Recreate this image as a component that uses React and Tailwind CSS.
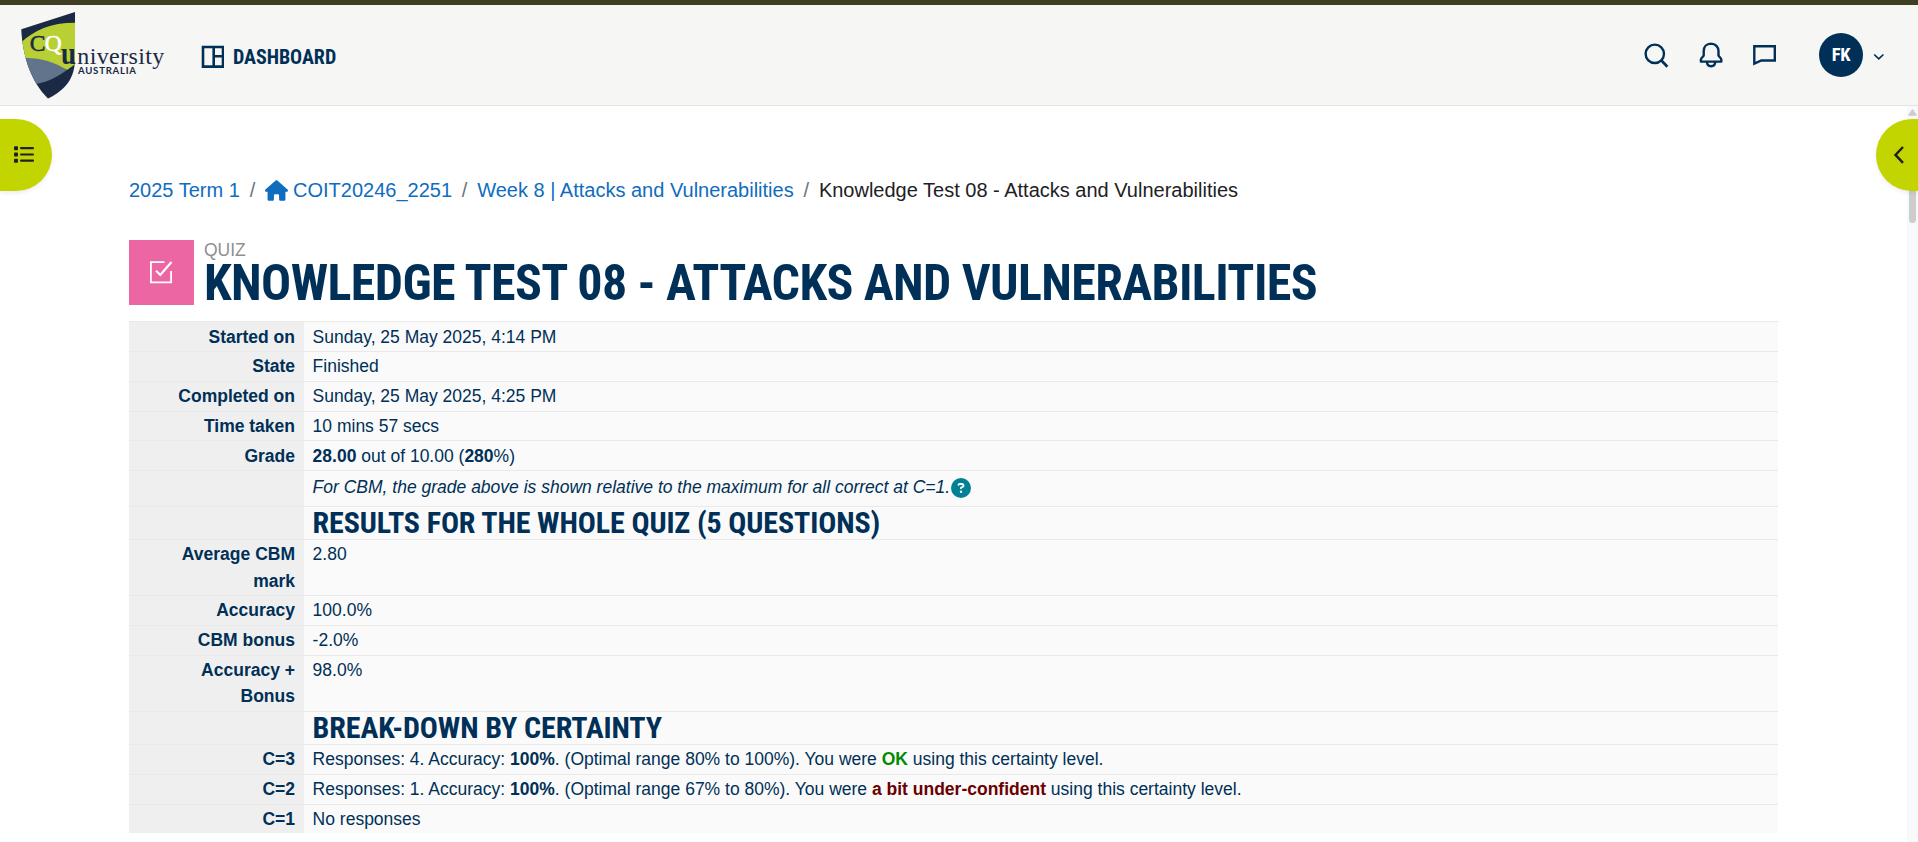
import { FaHouse, FaCircleQuestion } from "react-icons/fa6";

function Logo() {
  return (
    <svg width="150" height="92" viewBox="18 9 150 92" className="block">
      <clipPath id="shield">
        <path d="M21.3 29.3 L75 12 V58 C75 79 65 90 48 98.6 C31 82 22.500 56 21.300 29.300Z" />
      </clipPath>
      <g clipPath="url(#shield)">
        <rect x="18" y="9" width="60" height="92" fill="#1a2a45" />
        <path d="M18 46 C31 31 51 22 78 22.800 V62 L67 70 L27 58 L18 60Z" fill="#b9d035" />
        <path d="M18 58.200 C38 56.600 52 61 67.200 69.700 C58 76.500 49 81.500 36 84 L18 84Z" fill="#61748b" />
      </g>
      <g fontFamily="'Liberation Serif', serif">
        <text x="29.800" y="51" fontSize="23.500" fill="#1a2a45" stroke="#1a2a45" strokeWidth="0.500">C</text>
        <text x="44.800" y="51" fontSize="23.500" fill="#fff" stroke="#fff" strokeWidth="0.500">Q</text>
        <text x="61" y="63.500" fontSize="31" fontWeight="700" fill="#1a2a45" textLength="15" lengthAdjust="spacingAndGlyphs">u</text>
        <text x="77.300" y="63.500" fontSize="24" fill="#1a2a45" textLength="87" lengthAdjust="spacing">niversity</text>
      </g>
      <text x="78" y="73.800" fontSize="9.600" fontFamily="Lato, sans-serif" fontWeight="700" fill="#1a2a45" textLength="58" lengthAdjust="spacing">AUSTRALIA</text>
    </svg>
  );
}

function Header() {
  return (
    <header className="flex h-[106px] items-start border-t-[5px] border-b border-t-[#3e3f22] border-b-[#e4e4e2] bg-[#f6f6f4] text-[#003057]">
      <div className="ml-[18px] mt-1">
        <Logo />
      </div>
      <a className="ml-8 mt-[39px] flex items-start">
        <svg width="24" height="24" viewBox="0 0 24 24" fill="none" stroke="currentColor" strokeWidth="2.600">
          <path d="M3 3h20v19.600h-20zM13.700 3v19.600M13.700 12.200h9.300" />
        </svg>
        <span className="mt-px ml-[9px] font-['Roboto_Condensed'] text-[20px] leading-6 font-bold tracking-[-0.040px]">DASHBOARD</span>
      </a>
      <div className="mt-7 mr-[33px] ml-auto flex h-11 items-center">
        <svg width="26" height="28" viewBox="1643 41 26 28" fill="none" stroke="currentColor" strokeWidth="2.400">
          <circle cx="1654.800" cy="53.800" r="9.200" />
          <path d="M1661.200 60.300l6.200 6.500" strokeWidth="2.700" />
        </svg>
        <svg className="ml-[29px]" width="26" height="28" viewBox="1698 41 26 28" fill="none" stroke="currentColor" strokeWidth="2.400" strokeLinejoin="round">
          <path d="M1711 43.600c-4.600 0-7.300 3.400-7.300 7.600v4.300c0 1-2.800 2-2.800 4.100v2h20.400v-2c0-2.100-2.800-3.100-2.800-4.100v-4.300c0-4.200-2.900-7.600-7.500-7.600z" />
          <path d="M1707 61.700c0 2.900 1.700 4.500 4.100 4.500s4.100-1.600 4.100-4.500" />
        </svg>
        <svg className="ml-7" width="26" height="28" viewBox="1752 41 26 28" fill="none" stroke="currentColor" strokeWidth="2.400">
          <path d="M1754.300 46.300h20.500v14.200h-13.400l-7.100 3.200z" />
        </svg>
        <div className="ml-[41px] flex size-11 items-center justify-center rounded-full bg-[#003057] pt-px font-['Roboto_Condensed'] text-[18.500px] font-bold tracking-[-0.300px] text-white">
          FK
        </div>
        <svg className="mt-[3px] ml-[10px]" width="12" height="8" viewBox="0 0 12 8" fill="none" stroke="currentColor" strokeWidth="1.700">
          <path d="M1.200 1.500l4.600 4.300l4.600-4.300" />
        </svg>
      </div>
    </header>
  );
}

function Slash() {
  return <span className="w-[25.200px] text-center text-[#6a737b]">/</span>;
}

function Breadcrumb() {
  return (
    <nav className="flex h-6 items-center text-[20px] leading-6 whitespace-pre text-[#0f6cbf]">
      <a>2025 Term 1</a>
      <Slash />
      <FaHouse className="mr-[5px] h-[21px] w-[23px]" />
      <a>COIT20246_2251</a>
      <Slash />
      <a>Week 8 | Attacks and Vulnerabilities</a>
      <Slash />
      <span className="text-[#1d2125]">Knowledge Test 08 - Attacks and Vulnerabilities</span>
    </nav>
  );
}

function Heading({ children }) {
  return (
    <h3 className="font-['Roboto_Condensed'] text-[30px] leading-[29px] font-bold tracking-[-0.120px]">{children}</h3>
  );
}

const rows = [
  { h: "h-[30px]", pt: "pt-[2px]", label: "Started on", value: "Sunday, 25 May 2025, 4:14 PM" },
  { h: "h-[30px]", pt: "pt-px", label: "State", value: "Finished" },
  { h: "h-[30px]", pt: "pt-px", label: "Completed on", value: "Sunday, 25 May 2025, 4:25 PM" },
  { h: "h-[29px]", pt: "pt-px", label: "Time taken", value: "10 mins 57 secs" },
  { h: "h-[30px]", pt: "pt-[2px]", label: "Grade", value: <><b>28.00</b> out of 10.00 (<b>280</b>%)</> },
  {
    h: "h-[36px]", pt: "pt-[3px]", label: "",
    value: (
      <div className="flex items-center">
        <i>For CBM, the grade above is shown relative to the maximum for all correct at C=1.</i>
        <FaCircleQuestion className="mt-px ml-px size-5 text-[#008196]" />
      </div>
    ),
  },
  { h: "h-[33px]", pt: "pt-px", label: "", value: <Heading>RESULTS FOR THE WHOLE QUIZ (5 QUESTIONS)</Heading> },
  { h: "h-[56px]", pt: "pt-px", label: "Average CBM mark", value: "2.80" },
  { h: "h-[30px]", pt: "pt-px", label: "Accuracy", value: "100.0%" },
  { h: "h-[30px]", pt: "pt-px", label: "CBM bonus", value: "-2.0%" },
  { h: "h-[56px]", pt: "pt-px", lh: "leading-[26px]", label: "Accuracy + Bonus", value: "98.0%" },
  { h: "h-[33px]", pt: "pt-px", label: "", value: <Heading>BREAK-DOWN BY CERTAINTY</Heading> },
  {
    h: "h-[30px]", pt: "pt-px", label: "C=3",
    value: <>Responses: 4. Accuracy: <b>100%</b>. (Optimal range 80% to 100%). You were <b className="text-[#008a00]">OK</b> using this certainty level.</>,
  },
  {
    h: "h-[30px]", pt: "pt-px", label: "C=2",
    value: <>Responses: 1. Accuracy: <b>100%</b>. (Optimal range 67% to 80%). You were <b className="text-[#6b0000]">a bit under-confident</b> using this certainty level.</>,
  },
  { h: "h-[29px]", pt: "pt-px", label: "C=1", value: "No responses" },
];

function Summary() {
  return (
    <div className="mt-4 w-[1649px] bg-[#fafafa] text-[17.500px] leading-[26.500px] text-[#003057]">
      {rows.map((r, i) => (
        <div key={i} className={`flex border-t border-[#e9e9e9] ${r.h} ${r.lh || ""}`}>
          <div className={`w-[175px] shrink-0 bg-[#efefef] pr-[9px] pl-10 text-right font-bold ${r.pt}`}>{r.label}</div>
          <div className={`pl-[8.600px] whitespace-nowrap ${r.pt}`}>{r.value}</div>
        </div>
      ))}
    </div>
  );
}

export default function App() {
  return (
    <div className="relative h-[842px] w-[1918px] overflow-hidden bg-white font-['Liberation_Sans',Arial,sans-serif]">
      <Header />
      <main className="pt-[72px] pl-[129px]">
        <Breadcrumb />
        <div className="mt-[38px] flex h-[65px]">
          <div className="flex size-[65px] items-center justify-center bg-[#eb66a2]">
            <svg width="25" height="25" viewBox="149 260 25 25" fill="none" stroke="#fff" strokeWidth="1.800">
              <path d="M164.500 262.200H150.900V282.300H171.100V271" />
              <path d="M156 270.800l4.300 4.200L171.500 262" strokeWidth="2.200" />
            </svg>
          </div>
          <div className="ml-[10px] whitespace-nowrap">
            <div className="h-[18px] text-[17.500px] leading-5 text-[#8f8f8f]">QUIZ</div>
            <h1 className="font-['Roboto_Condensed'] text-[50px] leading-[50px] font-bold tracking-[-0.600px] text-[#003057]">
              KNOWLEDGE TEST 08 - ATTACKS AND VULNERABILITIES
            </h1>
          </div>
        </div>
        <Summary />
      </main>

      <div className="absolute top-[106px] right-0 flex h-[736px] w-[11px] flex-col items-center bg-[#f8f9fb]">
        <svg className="mt-[3px]" width="9" height="7" viewBox="0 0 9 7">
          <path d="M4.500 0.500L8.500 6.200H0.500Z" fill="#cdcdcd" stroke="#cdcdcd" strokeLinejoin="round" />
        </svg>
        <div className="mt-1 h-[103px] w-[7px] rounded-full bg-[#cdcdcd]" />
      </div>
      <button className="absolute top-[119px] left-0 flex h-[72px] w-[52px] items-center rounded-r-full bg-[#c2d500] pb-px pl-[14px] shadow-[0_2px_4px_rgba(0,0,0,0.080)]">
        <svg width="20" height="17" viewBox="0 0 20 17" fill="#1d2125">
          <rect x="0" y="0.200" width="4" height="4" rx="0.800" />
          <rect x="0" y="6.500" width="4" height="4" rx="0.800" />
          <rect x="0" y="12.700" width="4" height="4" rx="0.800" />
          <rect x="6" y="1.100" width="14" height="2.200" rx="1" />
          <rect x="6" y="7.400" width="14" height="2.200" rx="1" />
          <rect x="6" y="13.600" width="14" height="2.200" rx="1" />
        </svg>
      </button>
      <button className="absolute top-[119px] right-0 flex h-[72px] w-[42px] items-center rounded-l-full bg-[#c2d500] pb-px pl-[16px] shadow-[0_2px_4px_rgba(0,0,0,0.080)]">
        <svg width="12" height="18" viewBox="0 0 12 18" fill="none" stroke="#1d2125" strokeWidth="2.400">
          <path d="M11 1L3.500 8.900L11 16.800" />
        </svg>
      </button>
    </div>
  );
}
